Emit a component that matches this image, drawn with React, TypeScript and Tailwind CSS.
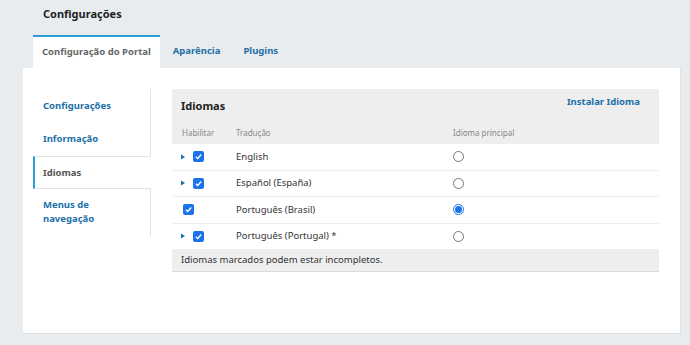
import React from 'react';

const rows = [
  { name: 'English', expand: true, primary: false },
  { name: 'Español (España)', expand: true, primary: false },
  { name: 'Português (Brasil)', expand: false, primary: true },
  { name: 'Português (Portugal) *', expand: true, primary: false },
];

function Check() {
  return (
    <span className="flex h-[11px] w-[11px] items-center justify-center rounded-[2px] bg-[#1a73e8]">
      <svg viewBox="0 0 12 12" className="h-[9px] w-[9px]">
        <path d="M2.5 6.2 L5 8.6 L9.6 3.4" fill="none" stroke="white" strokeWidth="1.8" />
      </svg>
    </span>
  );
}

function Radio({ on }: { on: boolean }) {
  return on ? (
    <span className="flex h-[11px] w-[11px] items-center justify-center rounded-full border border-[#1a73e8] bg-white">
      <span className="h-[7px] w-[7px] rounded-full bg-[#1a73e8]" />
    </span>
  ) : (
    <span className="block h-[11px] w-[11px] rounded-full border border-[#767676] bg-white" />
  );
}

export default function App() {
  return (
    <div
      className="h-[345px] w-[690px] overflow-hidden bg-[#e9ecee] text-[#222]"
      style={{ fontFamily: '"Noto Sans", sans-serif' }}
    >
      <div className="h-[35px] pl-[43px] pt-[5px] text-[11px] font-bold leading-[18px]">Configurações</div>

      {/* tabs */}
      <div className="flex h-[33px] pl-[33px] text-[9.5px] font-bold">
        <div className="flex items-center border-t-2 border-[#2a9fd8] bg-white px-[9px] text-[#666]">
          Configuração do Portal
        </div>
        <div className="flex items-center pl-[13px] text-[#1b6fa8]">Aparência</div>
        <div className="flex items-center pl-[23px] text-[#1b6fa8]">Plugins</div>
      </div>

      {/* panel */}
      <div className="ml-[23px] flex h-[266px] w-[658px] items-start border-r border-b border-[#dde1e3] bg-white pl-[10px] pt-[21px]">
        <div className="w-[118px] border-r border-[#e2e2e2] text-[9.5px] font-bold leading-[14px]">
          <div className="flex h-[33px] items-center pl-[10px] text-[#1b6fa8]">Configurações</div>
          <div className="flex h-[34px] items-center pl-[10px] text-[#1b6fa8]">Informação</div>
          <div className="-mr-px flex h-[33px] items-center border-y border-l-2 border-[#e2e2e2] border-l-[#2a9fd8] bg-white pl-[8px] text-[#555]">
            Idiomas
          </div>
          <div className="pl-[10px] pt-[9px] pb-[10px] text-[#1b6fa8]">
            Menus de
            <br />
            navegação
          </div>
        </div>

        <div className="ml-[21px] w-[487px]">
          <div className="bg-[#eeeeee]">
            <div className="flex h-[33px] items-center justify-between pl-[9px] pr-[19px]">
              <span className="pt-[1px] text-[11px] font-bold">Idiomas</span>
              <span className="-mt-[6px] text-[9.5px] font-bold text-[#1b6fa8]">Instalar Idioma</span>
            </div>
            <div className="flex h-[22px] items-center text-[8px] text-[#888]">
              <span className="w-[64px] pl-[10px]">Habilitar</span>
              <span className="w-[217px]">Tradução</span>
              <span>Idioma principal</span>
            </div>
          </div>
          {rows.map((r) => (
            <div key={r.name} className="flex h-[26.5px] items-center border-b border-[#eeeeee] text-[9.5px] text-[#333]">
              <span className="flex w-[64px] items-center pl-[8px]">
                {r.expand ? (
                  <>
                    <svg viewBox="0 0 6 6" className="mr-[7px] h-[6px] w-[6px]">
                      <path d="M1 0.5 L5 3 L1 5.5 Z" fill="#1b6fa8" />
                    </svg>
                    <Check />
                  </>
                ) : (
                  <span className="pl-[3px]">
                    <Check />
                  </span>
                )}
              </span>
              <span className="w-[217px]">{r.name}</span>
              <Radio on={r.primary} />
            </div>
          ))}
          <div className="flex h-[22px] items-center border-b border-[#dcdcdc] bg-[#eeeeee] pl-[9px] text-[9.5px] text-[#333]">
            Idiomas marcados podem estar incompletos.
          </div>
        </div>
      </div>
    </div>
  );
}
